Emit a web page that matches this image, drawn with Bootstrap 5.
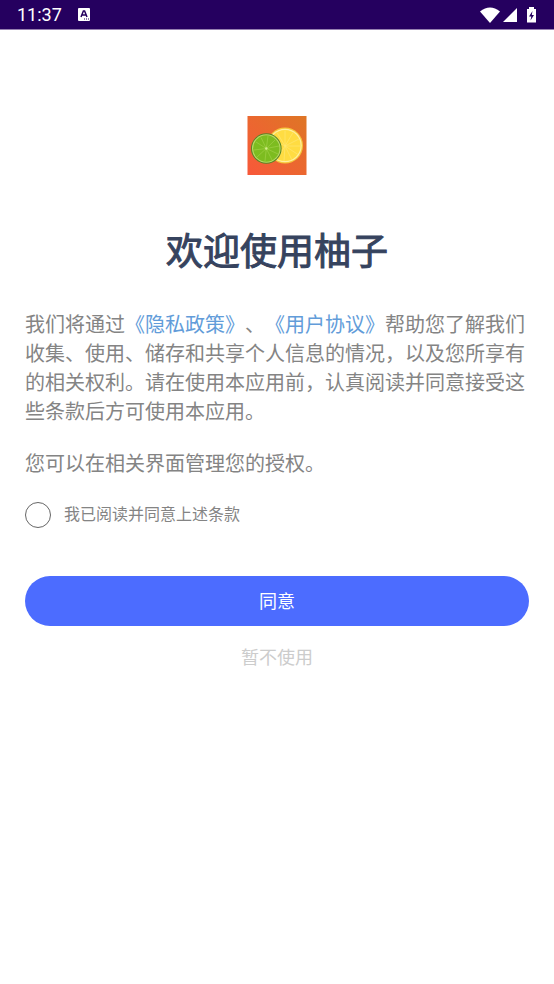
<!DOCTYPE html>
<html lang="zh-CN">
<head>
<meta charset="utf-8">
<meta name="viewport" content="width=device-width, initial-scale=1">
<title>欢迎使用柚子</title>
<link href="https://cdn.jsdelivr.net/npm/bootstrap@5.3.0/dist/css/bootstrap.min.css" rel="stylesheet">
<style>
body { font-family: Roboto, "Noto Sans CJK SC", sans-serif; color: #848484; background: #fff; text-spacing-trim: space-all; }
.status-bar { background: #25005f; border-bottom: 1px solid #9580b0; height: 30px; padding: 0 17px; color: #fff; font-size: 18px; line-height: 30px; }
.consent { padding: 86px 25px 24px; }
.app-logo { width: 60px; height: 60px; }
.welcome { font-size: 37px; line-height: 48px; font-weight: 400; -webkit-text-stroke: 1px #36435e; color: #36435e; margin: 53px 0 34px; }
.policy { font-size: 20px; line-height: 29px; }
.policy p { margin-bottom: 23px; }
.policy a { color: #629cd9; }
.terms-row { gap: 13px; font-size: 16px; line-height: 26px; margin-bottom: 48px; }
.terms-row .form-check-input { width: 26px; height: 26px; border: 1px solid #666; border-radius: 50%; }
.btn-agree { --bs-btn-bg: #4c6cff; --bs-btn-hover-bg: #3f5df0; --bs-btn-color: #fff; --bs-btn-hover-color: #fff; height: 50px; font-size: 18px; }
.btn-later { --bs-btn-color: #ccc; --bs-btn-hover-color: #999; font-size: 18px; line-height: 26px; margin-top: 13px; }
</style>
</head>
<body>
<header class="status-bar d-flex align-items-center">
  <span class="me-3">11:37</span>
  <svg width="12" height="13" viewBox="0 0 12 13" aria-hidden="true"><rect width="12" height="13" rx="1" fill="#fff"/><path d="M3 9 5.4 3h1.2L9 9M4 7h4" fill="none" stroke="#25005f" stroke-width="1.5"/><path d="M6 11h1M8 11h1M10 11h1" stroke="#25005f"/></svg>
  <svg class="ms-auto" width="57" height="18" viewBox="0 0 57 18" aria-hidden="true"><g fill="#fff"><path d="M0 5.5Q10 -2.5 20 5.5L10 17Z"/><path d="M37 2v14H23Z"/><path d="M49 1h5v2h2v13.5h-9V3h2Z"/></g><path d="M52.5 5 49 10.5h2.3L50.5 14.5 54 9h-2.2Z" fill="#25005f"/></svg>
</header>
<main class="consent">
  <div class="text-center">
    <svg class="app-logo d-block mx-auto" viewBox="0 0 60 60" role="img" aria-label="柚子">
      <defs><linearGradient id="bg" x1="1" y1="0" x2="0" y2="1"><stop stop-color="#de7625"/><stop offset="1" stop-color="#f8583a"/></linearGradient></defs>
      <rect x="0.5" y="0" width="59" height="59" fill="url(#bg)"/>
      <circle cx="38" cy="29.5" r="18" fill="#f6c63a"/>
      <circle cx="38" cy="29.5" r="16.8" fill="#fff0a0"/>
      <circle cx="38" cy="29.5" r="15.6" fill="#ffdc42"/>
      <path d="M38 30V14.5M38 30 46 16.5M38 30 52 23M38 30H53.5M38 30 51 38.5M38 30 45 44M38 30 37 45M38 30 30 43.5M38 30 24 23M38 30 30 16.5" stroke="#ffe978" stroke-width=".6"/>
      <circle cx="19.3" cy="32.5" r="15.3" fill="#568424"/>
      <circle cx="19.3" cy="32.5" r="14.3" fill="#b9d968"/>
      <circle cx="19.3" cy="32.5" r="13.2" fill="#7dbc20"/>
      <path d="M19.3 32.5 21 20M19.3 32.5 28 24M19.3 32.5 32 30M19.3 32.5 31 38M19.3 32.5 25 44M19.3 32.5 18 45M19.3 32.5 10 41M19.3 32.5 7 34M19.3 32.5 9 26M19.3 32.5 14 21.5" stroke="#9fd046" stroke-width=".7"/>
      <circle cx="19.3" cy="32.5" r="1.2" fill="#d4ed8b"/>
    </svg>
    <h1 class="welcome">欢迎使用柚子</h1>
  </div>
  <div class="policy">
    <p>我们将通过<a class="text-decoration-none" href="#privacy">《隐私政策》</a>、<a class="text-decoration-none" href="#agreement">《用户协议》</a>帮助您了解我们收集、使用、储存和共享个人信息的情况，以及您所享有的相关权利。请在使用本应用前，认真阅读并同意接受这些条款后方可使用本应用。</p>
    <p>您可以在相关界面管理您的授权。</p>
  </div>
  <div class="terms-row d-flex align-items-center">
    <input class="form-check-input m-0 flex-shrink-0" type="checkbox" id="terms">
    <label for="terms">我已阅读并同意上述条款</label>
  </div>
  <button type="button" class="btn btn-agree rounded-pill w-100 border-0">同意</button>
  <div class="text-center"><button type="button" class="btn btn-later border-0">暂不使用</button></div>
</main>
<script src="https://cdn.jsdelivr.net/npm/bootstrap@5.3.0/dist/js/bootstrap.bundle.min.js"></script>
</body>
</html>
